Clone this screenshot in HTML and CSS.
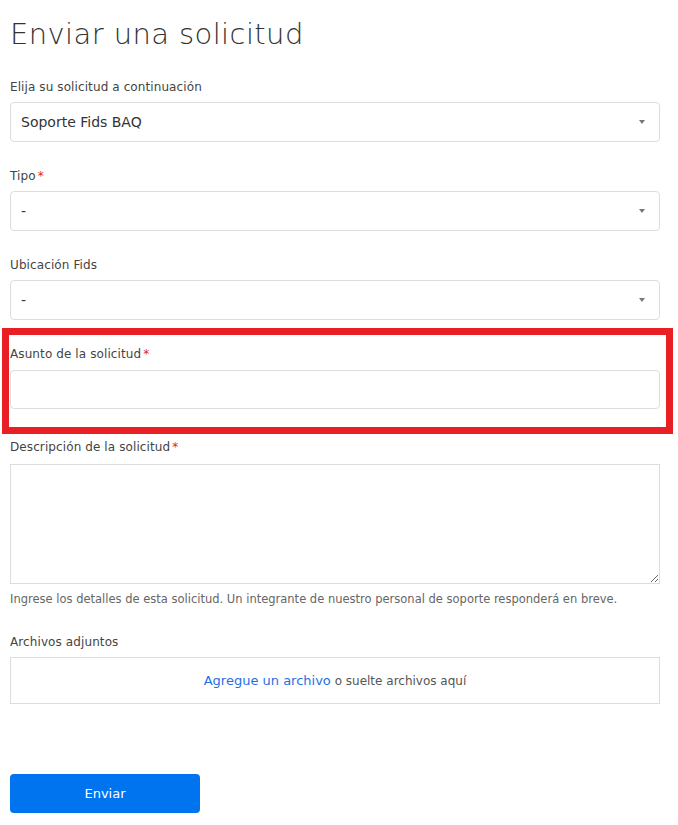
FILE: index.html
```html
<!DOCTYPE html>
<html lang="es">
<head>
    <meta charset="UTF-8">
    <meta name="viewport" content="width=device-width, initial-scale=1.0">
    <title>Enviar una solicitud</title>
    <link rel="stylesheet" href="styles.css">
</head>
<body>
    <div class="page">
        <h1>Enviar una solicitud</h1>

        <form class="request-form">
            <div class="field">
                <label>Elija su solicitud a continuación</label>
                <div class="select">Soporte Fids BAQ<span class="arrow"></span></div>
            </div>

            <div class="field">
                <label>Tipo<span class="req">*</span></label>
                <div class="select">-<span class="arrow"></span></div>
            </div>

            <div class="field">
                <label>Ubicación Fids</label>
                <div class="select">-<span class="arrow"></span></div>
            </div>

            <div class="field field-subject">
                <label>Asunto de la solicitud<span class="req">*</span></label>
                <input type="text" class="text-input">
                <div class="highlight"></div>
            </div>

            <div class="field field-desc">
                <label>Descripción de la solicitud<span class="req">*</span></label>
                <textarea class="textarea"></textarea>
                <p class="hint">Ingrese los detalles de esta solicitud. Un integrante de nuestro personal de soporte responderá en breve.</p>
            </div>

            <div class="field field-files">
                <label>Archivos adjuntos</label>
                <div class="dropzone"><a href="#">Agregue un archivo</a> o suelte archivos aquí</div>
            </div>

            <button type="button" class="submit">Enviar</button>
        </form>
    </div>
</body>
</html>
```

FILE: styles.css
```css
body { margin: 0; font-family: "DejaVu Sans", sans-serif; color: #333; background: #fff; }
.page { padding: 0 18px 0 10px; }
h1 { font-size: 29px; font-weight: 300; margin: 14px 0 23px; line-height: 40px; color: #333; letter-spacing: 0.4px; }
.field { position: relative; margin-bottom: 24px; }
label { display: block; font-size: 12px; line-height: 20px; margin-bottom: 5px; color: #444; letter-spacing: 0.1px; }
.req { color: #e0242b; margin-left: 2px; }
.select { position: relative; height: 40px; box-sizing: border-box; border: 1px solid #ddd; border-radius: 4px; padding: 0 10px; line-height: 38px; font-size: 14px; color: #333; }
.arrow { position: absolute; right: 14px; top: 17px; width: 0; height: 0; border-left: 3px solid transparent; border-right: 3px solid transparent; border-top: 4px solid #777; }
.text-input { display: block; width: 100%; height: 39px; box-sizing: border-box; border: 1px solid #ddd; border-radius: 4px; margin: 0; }
.field-subject label { margin-bottom: 6px; }
.highlight { position: absolute; left: -8px; right: -13px; top: -16px; bottom: -25px; border: 7px solid #e82025; }
.field-subject { margin-bottom: 28px; }
.field-desc { margin-bottom: 0; }
.field-desc label { margin-bottom: 7px; }
.textarea { display: block; width: 100%; height: 120px; box-sizing: border-box; border: 1px solid #ddd; border-radius: 0; margin: 0; resize: vertical; }
.hint { font-size: 11.5px; color: #666; margin: 7px 0 0; line-height: 16px; }
.field-files { margin-top: 25px; }
.dropzone { height: 47px; box-sizing: border-box; border: 1px solid #ddd; text-align: center; line-height: 45px; font-size: 12px; color: #555; }
.dropzone a { color: #1f6fe5; text-decoration: none; font-size: 13px; }
.submit { display: block; margin-top: 70px; width: 190px; height: 39px; background: #0073ef; color: #fff; border: none; border-radius: 4px; font-family: inherit; font-size: 13px; }
```
